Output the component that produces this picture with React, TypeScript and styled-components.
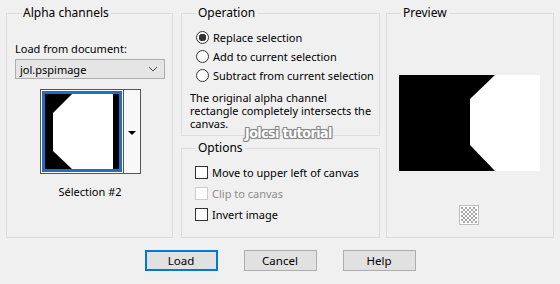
import React from 'react';
import styled, { createGlobalStyle } from 'styled-components';

const GlobalStyle = createGlobalStyle`
	body {
		margin: 0;
		background: #f0f0f0;
		font-family: 'Noto Sans', 'Open Sans', sans-serif;
		font-size: 11px;
		color: #000;
	}
`;

const Dialog: React.FC = () => {
	return (
		<Wrapper>
			<GlobalStyle />
			<div className="panels">
				<Group $width={167}>
					<Legend>Alpha channels</Legend>
					<Label>Load from document:</Label>
					<Select>
						<span>jol.pspimage</span>
						<Chevron viewBox="0 0 10 6">
							<path d="M1 1 L5 5 L9 1" fill="none" stroke="#444" strokeWidth="1" />
						</Chevron>
					</Select>
					<Thumb>
						<div className="frame">
							<svg viewBox="0 0 74 75" width="74" height="75" preserveAspectRatio="none">
								<rect width="74" height="75" fill="#000" />
								<polygon points="27,0 68,0 68,75 27,75 8,57 8,19" fill="#fff" />
							</svg>
						</div>
						<div className="drop">
							<span className="arrow" />
						</div>
					</Thumb>
					<Caption>Sélection #2</Caption>
				</Group>

				<div className="middle">
					<Group $width={199} $height={131}>
						<Legend>Operation</Legend>
						<Radio $checked>Replace selection</Radio>
						<Radio>Add to current selection</Radio>
						<Radio>Subtract from current selection</Radio>
						<Note>
							The original alpha channel rectangle completely intersects the canvas.
						</Note>
					</Group>
					<Group $width={199} $height={98}>
						<Legend>Options</Legend>
						<Check>Move to upper left of canvas</Check>
						<Check $disabled>Clip to canvas</Check>
						<Check>Invert image</Check>
					</Group>
				</div>

				<Group $width={168}>
					<Legend>Preview</Legend>
					<Preview>
						<svg viewBox="0 0 141 96" width="141" height="96">
							<rect width="141" height="96" fill="#000" />
							<polygon points="96,0 141,0 141,96 96,96 71,70 71,24" fill="#fff" />
						</svg>
					</Preview>
					<Checker>
						<svg viewBox="0 0 16 16" width="16" height="16">
							{Array.from({ length: 64 }).map((_, i) => {
								const x = i % 8;
								const y = Math.floor(i / 8);
								return (x + y) % 2 === 0 ? (
									<rect key={i} x={x * 2} y={y * 2} width="2" height="2" fill="#a6a6a6" />
								) : null;
							})}
						</svg>
					</Checker>
				</Group>
			</div>

			<div className="buttons">
				<Button $default>Load</Button>
				<Button>Cancel</Button>
				<Button>Help</Button>
			</div>

			<Watermark>Jolcsi tutorial</Watermark>
		</Wrapper>
	);
};

const Wrapper = styled.div`
	position: relative;
	width: 560px;
	height: 284px;
	box-sizing: border-box;
	padding: 5px 0 0 6px;
	.panels {
		display: flex;
		align-items: flex-start;
	}
	.middle {
		display: flex;
		flex-direction: column;
		gap: 4px;
		margin: 0 6px 0 8px;
	}
	.buttons {
		display: flex;
		justify-content: center;
		gap: 26px;
		margin-top: 12px;
		padding-right: 6px;
	}
`;

const Group = styled.fieldset<{ $width: number; $height?: number }>`
	box-sizing: border-box;
	width: ${(p) => p.$width}px;
	height: ${(p) => (p.$height ? `${p.$height}px` : '233px')};
	margin: 0;
	padding: 0 0 0 8px;
	border: 1px solid #dcdcdc;
	display: flex;
	flex-direction: column;
	min-width: 0;
`;

const Legend = styled.legend`
	padding: 0 2px;
	margin-left: 6px;
	line-height: 16px;
	font-size: 12px;
`;

const Label = styled.div`
	margin-top: 20px;
	line-height: 16px;
`;

const Select = styled.div`
	box-sizing: border-box;
	width: 150px;
	height: 20px;
	margin-top: 2px;
	border: 1px solid #adadad;
	background: #e5e5e5;
	display: flex;
	align-items: center;
	justify-content: space-between;
	padding: 0 6px 0 4px;
`;

const Chevron = styled.svg`
	width: 10px;
	height: 6px;
`;

const Thumb = styled.div`
	display: flex;
	align-self: flex-start;
	margin: 10px 0 0 25px;
	height: 85px;
	.frame {
		box-sizing: border-box;
		width: 83px;
		height: 85px;
		border: 1px solid #555;
		border-right: none;
		padding: 1px;
		background: #fff;
	}
	.frame svg {
		display: block;
		border: 3px solid #1f6fbf;
	}
	.drop {
		box-sizing: border-box;
		width: 18px;
		height: 85px;
		border: 1px solid #555;
		background: #f8f8f8;
		display: flex;
		align-items: center;
		justify-content: center;
	}
	.arrow {
		width: 0;
		height: 0;
		border-left: 4px solid transparent;
		border-right: 4px solid transparent;
		border-top: 4px solid #000;
		margin-top: 3px;
	}
`;

const Caption = styled.div`
	width: 150px;
	text-align: center;
	margin-top: 10px;
	line-height: 16px;
`;

const Radio = styled.div<{ $checked?: boolean }>`
	display: flex;
	align-items: center;
	height: 19px;
	white-space: nowrap;
	&:first-of-type {
		margin-top: 7px;
	}
	&::before {
		content: '';
		flex-shrink: 0;
		box-sizing: border-box;
		width: 13px;
		height: 13px;
		margin: 0 4px 0 6px;
		border-radius: 50%;
		border: 1px solid #333;
		background: ${(p) =>
			p.$checked ? 'radial-gradient(circle, #333 0 3.5px, #fff 4px)' : '#fff'};
	}
`;

const Note = styled.div`
	margin-top: 6px;
	line-height: 13px;
	padding-right: 4px;
`;

const Check = styled.div<{ $disabled?: boolean }>`
	display: flex;
	align-items: center;
	height: 21px;
	white-space: nowrap;
	color: ${(p) => (p.$disabled ? '#8d8d8d' : '#000')};
	&:first-of-type {
		margin-top: 6px;
	}
	&::before {
		content: '';
		flex-shrink: 0;
		box-sizing: border-box;
		width: 13px;
		height: 13px;
		margin: 0 4px 0 5px;
		border: 1px solid ${(p) => (p.$disabled ? '#cccccc' : '#333')};
		background: #fff;
	}
`;

const Preview = styled.div`
	margin: 54px 0 0 4px;
	svg {
		display: block;
	}
`;

const Checker = styled.div`
	align-self: flex-start;
	margin: 34px 0 0 64px;
	width: 20px;
	height: 20px;
	box-sizing: border-box;
	border: 1px solid #bdbdbd;
	background: #fff;
	display: flex;
	align-items: center;
	justify-content: center;
`;

const Button = styled.button<{ $default?: boolean }>`
	box-sizing: border-box;
	width: 73px;
	height: 21px;
	padding: 0;
	font: inherit;
	font-size: 11.5px;
	color: #000;
	background: #e1e1e1;
	border: ${(p) => (p.$default ? '2px solid #0078d7' : '1px solid #adadad')};
`;

const Watermark = styled.div`
	position: absolute;
	left: 245px;
	top: 125px;
	font-family: 'DejaVu Sans Condensed', 'DejaVu Sans', sans-serif;
	font-stretch: condensed;
	font-weight: bold;
	font-size: 14px;
	line-height: 16px;
	color: #fff;
	letter-spacing: -0.5px;
	text-shadow: -1px -1px 0 #8a8a8a, 1px -1px 0 #8a8a8a, -1px 1px 0 #8a8a8a, 1px 1px 0 #8a8a8a,
		0 0 2px #666;
`;

export default function App() {
	return <Dialog />;
}
